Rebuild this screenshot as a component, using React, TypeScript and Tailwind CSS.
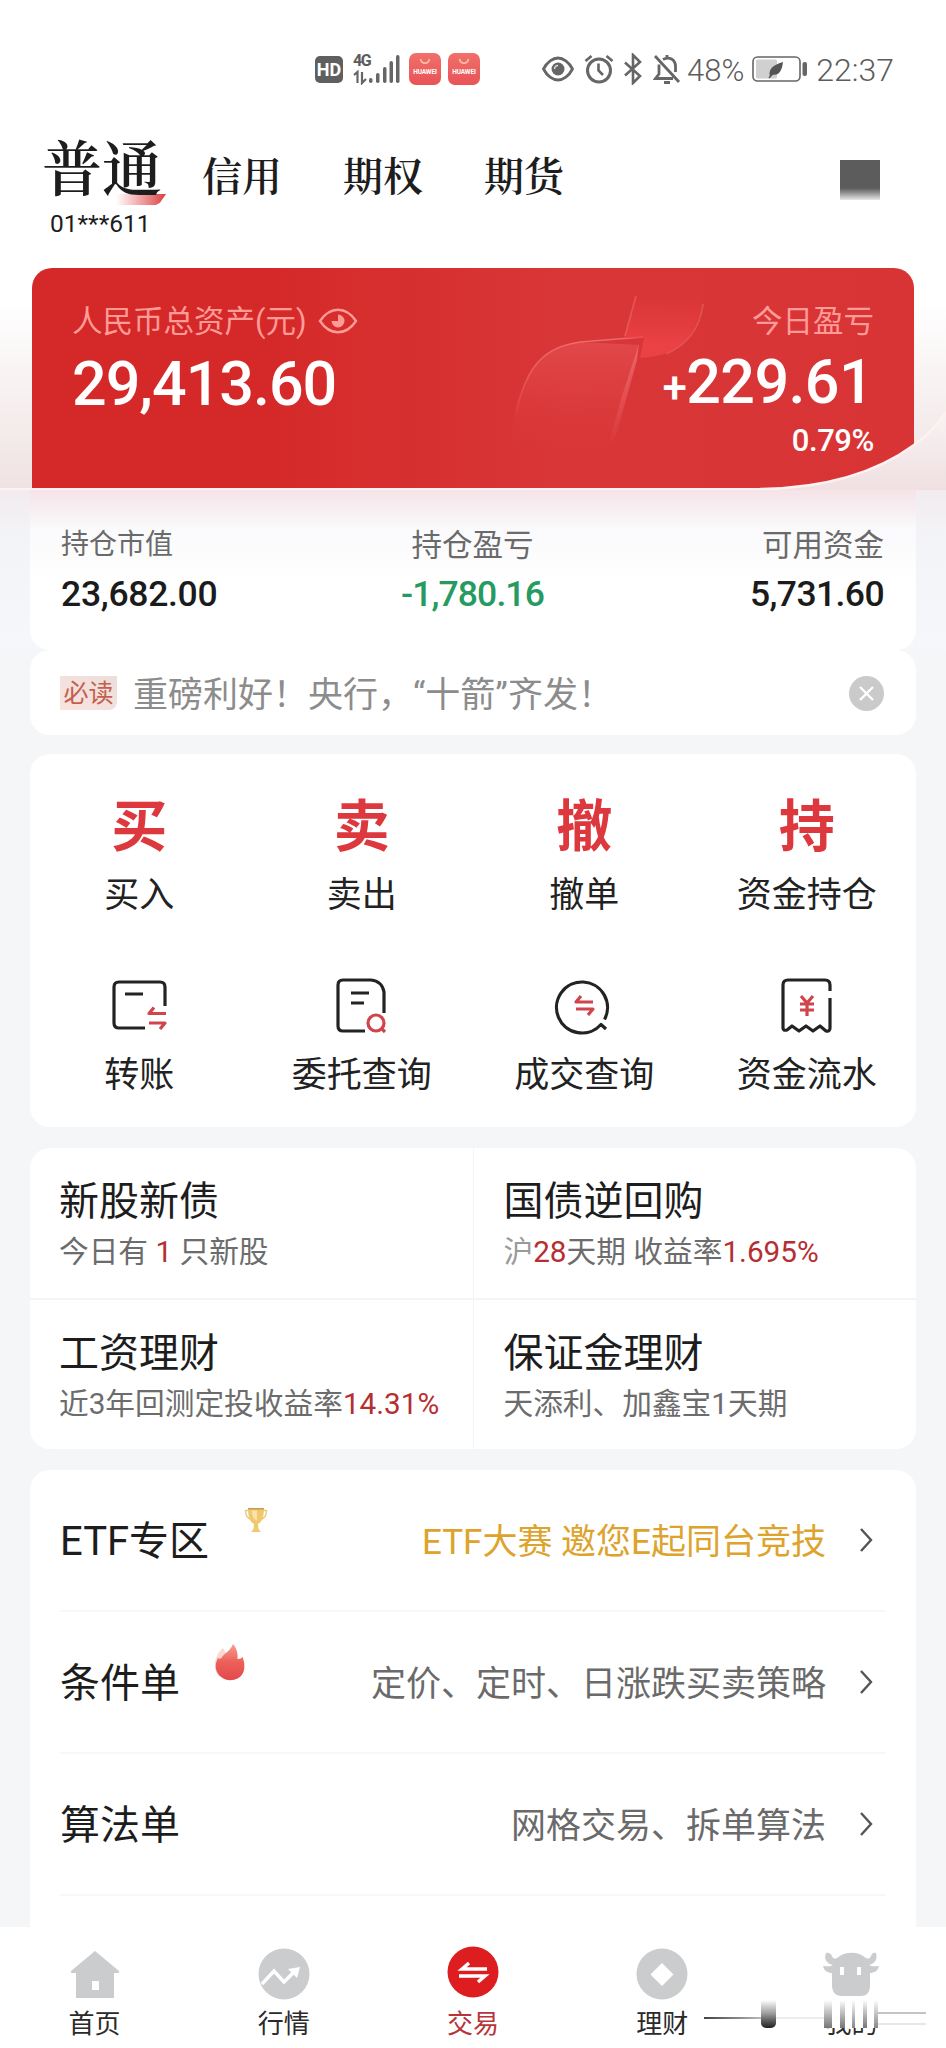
import type { ReactNode } from "react";

const sans = "font-['Roboto','Noto_Sans_CJK_SC',sans-serif]";
const serif = "font-['Noto_Serif_CJK_SC','Noto_Sans_CJK_SC',serif]";

function StatusBar() {
  return (
    <div className="flex h-[100px] items-center pt-[38px] pl-[315px] text-[#5c5c5c]">
      <div className="flex h-[27px] w-[28px] items-center justify-center rounded-[5px] bg-[#5f5f5f] text-[18px] font-bold text-white">HD</div>
      <div className="ml-[10px] flex h-[32px] w-[48px] flex-col">
        <span className="text-[16px] leading-[16px] font-bold tracking-[-1.5px]">4G</span>
        <svg className="-mt-[16px] h-[32px] w-[48px]" viewBox="0 0 48 32">
          <path d="M1 22l3.500-3V30M9 19v11l4-4" stroke="#666" fill="none" strokeWidth="2.200" />
          <g fill="#666">
            <rect x="16" y="25" width="3.500" height="5" rx="1.700" />
            <rect x="23" y="20" width="3.500" height="10" rx="1.700" />
            <rect x="30" y="14" width="3.500" height="16" rx="1.700" />
            <rect x="36.500" y="8" width="3.500" height="22" rx="1.700" />
            <rect x="43" y="2" width="3.500" height="28" rx="1.700" />
          </g>
        </svg>
      </div>
      <HuaweiBadge className="ml-[8px]" />
      <HuaweiBadge className="ml-[7px]" />
      <svg className="ml-[62px] h-[26px] w-[32px]" viewBox="0 0 32 26" fill="none" stroke="#666" strokeWidth="2.800">
        <path d="M1.500 13C5 6 11 2 16 2s11 4 14.500 11C27 20 21 24 16 24S5 20 1.500 13z" strokeLinejoin="round" />
        <circle cx="16" cy="13" r="6.500" fill="#666" stroke="none" />
        <path d="M12.500 13a3.500 3.500 0 0 1 3.500-3.500" stroke="#ddd" strokeWidth="1.500" />
      </svg>
      <svg className="ml-[10px] h-[30px] w-[30px]" viewBox="0 0 30 30" fill="none" stroke="#666" strokeWidth="3">
        <circle cx="15" cy="16.500" r="11.500" />
        <path d="M14.500 9.500v7l4.500 4.500M1.500 7l6-5M28.500 7l-6-5" strokeWidth="2.600" />
      </svg>
      <svg className="ml-[9px] h-[32px] w-[20px]" viewBox="0 0 20 32" fill="none" stroke="#666" strokeWidth="2.600">
        <path d="M2 9.500l15 13.500-7 7V2l7 7L2 22.500" />
      </svg>
      <svg className="ml-[10px] h-[30px] w-[28px]" viewBox="0 0 28 30" fill="none" stroke="#666" strokeWidth="2.800">
        <path d="M2 2l24 26M10 5.500c6-3.500 12.500 0 12.500 7V18M6 10.500V20l-3.500 4.500H20" />
        <path d="M11 28.500h6M14 1v4" />
      </svg>
      <span className="mt-[2px] ml-[6px] text-[31px] leading-none font-light">48%</span>
      <svg className="ml-[8px] h-[26px] w-[56px]" viewBox="0 0 56 26">
        <rect x="1" y="1" width="47" height="24" rx="4.500" fill="#fff" stroke="#666" strokeWidth="1.600" />
        <rect x="4" y="3.500" width="21" height="19" rx="1.500" fill="#d0d0d0" />
        <path d="M18 21c-2-7 2-12 13-15-1 9-4 14-11 12.500z" fill="#555" />
        <path d="M17 22l8-9" stroke="#555" strokeWidth="1.500" />
        <rect x="50.500" y="6" width="4.500" height="14" rx="2" fill="#666" />
      </svg>
      <span className="mt-[2px] ml-[8px] text-[32px] leading-none font-light">22:37</span>
    </div>
  );
}

function HuaweiBadge({ className }: { className: string }) {
  return (
    <div className={`flex h-[32px] w-[32px] flex-col items-center rounded-[7px] bg-gradient-to-b from-[#f0706a] to-[#e95257] ${className}`}>
      <svg className="mt-[5px] h-[7px] w-[12px]" viewBox="0 0 12 7">
        <path d="M1.500 1c1 5.500 8 5.500 9 0" fill="none" stroke="#ffc2a8" strokeWidth="1.500" />
      </svg>
      <span className="mt-[2px] text-[6.500px] leading-[10px] font-bold tracking-[-0.1px] text-white">HUAWEI</span>
    </div>
  );
}

function AccountTabs() {
  return (
    <div className="flex h-[168px] items-start pl-[42px]">
      <div className="relative w-[160px] pt-[31px] text-[#1d1d1d]">
        <div className="absolute top-[94px] left-[74px] h-[11px] w-[50px] bg-gradient-to-r from-white via-[#efa2a5] to-[#d73a40] [clip-path:polygon(0_0,100%_0,88%_80%,80%_100%,0_100%)]" />
        <div className={`relative text-[60px] leading-[68px] font-semibold ${serif}`}>普通</div>
        <div className="mt-[11px] pl-[8px] text-[24.500px] leading-[28px]">01***611</div>
      </div>
      <div className={`flex pt-[49px] text-[40px] leading-[50px] font-semibold text-[#1d1d1d] ${serif}`}>
        <span className="w-[141px]">信用</span>
        <span className="w-[141px]">期权</span>
        <span className="w-[80px]">期货</span>
      </div>
      <div className="mt-[60px] ml-[276px] h-[40px] w-[40px] bg-gradient-to-b from-[#5c5c5c] from-70% to-[#e8e8e8]" />
    </div>
  );
}

function AssetCard() {
  return (
    <section className="relative h-[222px] bg-gradient-to-b from-white from-15% to-[#efe2e2] px-[32px]">
      <div className="relative flex h-[220px] justify-between overflow-hidden rounded-t-[20px] bg-gradient-to-r from-[#d52828] from-25% via-[#d93637] via-60% to-[#d83435]">
        <svg className="absolute top-0 left-[460px] h-[220px] w-[260px]" viewBox="0 0 260 220" fill="none">
          <defs>
            <linearGradient id="leafLow" x1="0" y1="0" x2="0" y2="1">
              <stop offset="0" stopColor="#f0686a" stopOpacity=".36" />
              <stop offset=".85" stopColor="#e04a4a" stopOpacity="0" />
            </linearGradient>
            <linearGradient id="leafTop" x1="0" y1="0" x2="0" y2="1">
              <stop offset=".1" stopColor="#ec4146" stopOpacity="0" />
              <stop offset=".8" stopColor="#ef4448" stopOpacity=".8" />
            </linearGradient>
            <linearGradient id="leafStem" x1="0" y1="0" x2="0" y2="1">
              <stop offset="0" stopColor="#f2777a" stopOpacity=".7" />
              <stop offset="1" stopColor="#f2777a" stopOpacity="0" />
            </linearGradient>
            <linearGradient id="leafEdge" x1="0" y1="0" x2="0" y2="1">
              <stop offset="0" stopColor="#f27d7d" stopOpacity=".75" />
              <stop offset="1" stopColor="#f27d7d" stopOpacity=".1" />
            </linearGradient>
          </defs>
          <path d="M22 146C34 98 52 79 88 74L147 77 120 180 15 200z" fill="url(#leafLow)" />
          <path d="M24 146C34 98 52 79 88 74L151 69" stroke="url(#leafEdge)" strokeWidth="1.500" />
          <path d="M147 76L145 92 124 168 116 178 130 128z" fill="url(#leafStem)" />
          <path d="M146 22L132 70 152 70 148 90C190 88 208 66 212 20z" fill="url(#leafTop)" />
          <path d="M144 28L133 68M174 86C198 76 208 58 211 36" stroke="#f27d7d" strokeOpacity=".4" strokeWidth="1.800" />
        </svg>
        <div className="relative pt-[36px] pl-[40px]">
          <div className="flex h-[36px] items-center text-[#ff9b97]">
            <span className="text-[30.500px] leading-none">人民币总资产(元)</span>
            <svg className="-mt-[2px] ml-[11px] h-[28px] w-[40px]" viewBox="0 0 40 28" fill="none" stroke="currentColor" strokeWidth="2.400">
              <path d="M2 14C12-1 28-1 38 14 28 29 12 29 2 14z" />
              <path d="M20 7.500v6.500h-6.500a6.500 6.500 0 1 0 6.500-6.500z" fill="currentColor" stroke="none" />
            </svg>
          </div>
          <div className="mt-[9px] text-[61px] leading-[70px] font-medium tracking-[-1px] text-white">29,413.60</div>
        </div>
        <div className="relative flex flex-col items-end pt-[36px] pr-[40px]">
          <div className="flex h-[36px] items-center text-[30.500px] leading-none text-[#ff9b97]">今日盈亏</div>
          <div className="mt-[7px] mr-[1px] h-[70px] text-[61px] leading-[70px] font-medium tracking-[-0.6px] text-white">
            <span className="text-[44px] leading-none">+</span>229.61
          </div>
          <div className="mt-[6px] text-[31px] leading-[36px] font-medium tracking-[-0.4px] text-white">0.79%</div>
        </div>
      </div>
      {/* rounded sweep that cuts the lower right corner */}
      <svg className="absolute right-0 bottom-0 h-[90px] w-[186px]" viewBox="0 0 186 90">
        <defs>
          <linearGradient id="sweep" x1="0" y1="0" x2="0" y2="1">
            <stop offset="0" stopColor="#f8f2f3" />
            <stop offset="1" stopColor="#f0e0e2" />
          </linearGradient>
        </defs>
        <path d="M0 89C70 88 120 70 154 45C168 35 178 25 186 12V90H0z" fill="url(#sweep)" />
        <path d="M0 89C70 88 120 70 154 45C168 35 178 25 186 12" fill="none" stroke="#fff1f1" strokeWidth="2.500" />
      </svg>
      <div className="absolute bottom-0 left-0 h-[2px] w-[780px] bg-[#fdf1f1]" />
    </section>
  );
}

function Holdings() {
  return (
    <section className="bg-gradient-to-b from-[#f2ebef] via-[#f3f4f7] via-30% to-[#f5f7fa] px-[30px]">
      <div className="grid h-[160px] grid-cols-3 rounded-b-[20px] bg-gradient-to-b from-[#f5e3e7] via-[#fafafc] via-25% to-white to-60% pt-[37px] pr-[32px] pl-[31px]">
        <div>
          <div className="text-[28px] leading-[36px] text-[#6a6a6a]">持仓市值</div>
          <div className="mt-[11px] text-[35.500px] leading-[40px] font-medium tracking-[-0.3px] text-[#1b1b1b]">23,682.00</div>
        </div>
        <div className="flex flex-col items-center">
          <div className="text-[30.500px] leading-[38px] text-[#6a6a6a]">持仓盈亏</div>
          <div className="mt-[9px] text-[35.500px] leading-[40px] font-medium tracking-[-0.9px] text-[#259b62]">-1,780.16</div>
        </div>
        <div className="flex flex-col items-end">
          <div className="text-[30.500px] leading-[38px] text-[#6a6a6a]">可用资金</div>
          <div className="mt-[9px] text-[35.500px] leading-[40px] font-medium tracking-[-0.6px] text-[#1b1b1b]">5,731.60</div>
        </div>
      </div>
    </section>
  );
}

function Notice() {
  return (
    <section className="mx-[30px] flex h-[85px] items-center rounded-[20px] bg-white pr-[32px] pl-[30px]">
      <span className="flex h-[34px] w-[57px] items-center justify-center rounded-br-[8px] bg-gradient-to-tr from-[#fae3de] to-[#ecdedb] pt-[2px] text-[25px] leading-none text-[#c4604f]">必读</span>
      <span className="ml-[16px] flex-1 pt-[5px] text-[35px] leading-none text-[#8c8c8c]">重磅利好！央行，“十箭”齐发！</span>
      <svg className="mt-px h-[35px] w-[35px]" viewBox="0 0 35 35">
        <circle cx="17.500" cy="17.500" r="17.500" fill="#cacaca" />
        <path d="M11 11l13 13M24 11L11 24" stroke="#fff" strokeWidth="2.400" />
      </svg>
    </section>
  );
}

const ink = "#232323";
const red = "#cf454b";

const actions: { label: string; icon: ReactNode }[] = [
  { label: "买入", icon: <RedGlyph>买</RedGlyph> },
  { label: "卖出", icon: <RedGlyph>卖</RedGlyph> },
  { label: "撤单", icon: <RedGlyph>撤</RedGlyph> },
  { label: "资金持仓", icon: <RedGlyph>持</RedGlyph> },
  {
    label: "转账",
    icon: (
      <LineIcon>
        <path d="M54 28V9q0-5-5-5H8Q3 4 3 9v36q0 5 5 5h26M14 16h18" stroke={ink} />
        <path d="M55 35.500H38l5-6M38 45h16l-5 6" stroke={red} />
      </LineIcon>
    ),
  },
  {
    label: "委托查询",
    icon: (
      <LineIcon>
        <path d="M50 35V14Q48 3 37 2H9Q4 2 4 7v41q0 5 5 5h22M17 15h18M17 25h13" stroke={ink} />
        <circle cx="42" cy="45" r="8" stroke={red} />
        <path d="M47 50l4 4" stroke={red} />
      </LineIcon>
    ),
  },
  {
    label: "成交查询",
    icon: (
      <LineIcon>
        <path d="M48.500 41.500A25.500 25.500 0 1 0 45 46.500l5 4.500" stroke={ink} />
        <path d="M37 24H20l5-6M20 31h17l-5 6" stroke={red} />
      </LineIcon>
    ),
  },
  {
    label: "资金流水",
    icon: (
      <LineIcon>
        <path d="M51 13V7q0-5-5-5H9Q4 2 4 7v43q0 3 4 2l5-4 7 5 7-5 7 5 7-5 6 5q4 1 4-3V20" stroke={ink} />
        <path d="M22 18l6 7 6-7M21 26h14M21 32h14M28 25v13" stroke={red} />
      </LineIcon>
    ),
  },
];

function RedGlyph({ children }: { children: string }) {
  return <span className="text-[56px] leading-none font-bold text-[#dc383d]">{children}</span>;
}

function LineIcon({ children }: { children: ReactNode }) {
  return (
    <svg className="-mt-[2px] h-[56px] w-[56px] overflow-visible" viewBox="0 0 56 56" fill="none" strokeWidth="3.200" strokeLinejoin="round">
      {children}
    </svg>
  );
}

function QuickActions() {
  return (
    <section className="mx-[30px] mt-[19px] h-[373px] rounded-[20px] bg-white pt-[43px]">
      <div className="-mx-[2px] grid grid-cols-4">
        {actions.map(({ label, icon }) => (
          <div key={label} className="flex h-[180px] flex-col items-center">
            <div className="flex h-[60px] items-center">{icon}</div>
            <div className="mt-[18px] text-[35px] leading-[42px] text-[#222]">{label}</div>
          </div>
        ))}
      </div>
    </section>
  );
}

function Red({ children }: { children: string }) {
  return <span className="text-[#b52e31]">{children}</span>;
}

const products: { title: string; sub: ReactNode }[] = [
  { title: "新股新债", sub: <>今日有 <Red>1</Red> 只新股</> },
  { title: "国债逆回购", sub: <><span className="text-[#9a9a9a]">沪</span><Red>28</Red>天期 收益率<Red>1.695%</Red></> },
  { title: "工资理财", sub: <>近3年回测定投收益率<Red>14.31%</Red></> },
  { title: "保证金理财", sub: "天添利、加鑫宝1天期" },
];

function Products() {
  return (
    <section className="mx-[30px] mt-[21px] grid h-[301px] grid-cols-2 gap-x-px gap-y-[2px] overflow-hidden rounded-[20px] bg-[#f3f4f5]">
      {products.map(({ title, sub }) => (
        <div key={title} className="bg-white pt-[29px] pl-[29px] whitespace-nowrap even:pl-[30px]">
          <div className="text-[40px] leading-[50px] text-[#1d1d1d]">{title}</div>
          <div className="mt-[7px] text-[29.700px] leading-[36px] text-[#6c6c6c]">{sub}</div>
        </div>
      ))}
    </section>
  );
}

function Trophy() {
  return (
    <svg className="h-[26px] w-[26px]" viewBox="0 0 26 26">
      <path d="M6 3.500H2.500c0 5 2 8 6 9M20 3.500h3.500c0 5-2 8-6 9" fill="none" stroke="#ecca87" strokeWidth="1.500" />
      <path d="M5 1h16c0 9-2 14-6 16l.5 5 2.500 3H8l2.500-3 .5-5C7 15 5 10 5 1z" fill="#f0c870" />
      <path d="M5 1h16v1.500H5z" fill="#c99b4c" />
      <path d="M9 3.500h5v10C10 12 9 9 9 3.500z" fill="#fae3a4" />
    </svg>
  );
}

function Flame() {
  return (
    <svg className="h-[37px] w-[34px]" viewBox="0 0 34 37">
      <defs>
        <linearGradient id="flame" x1="0" y1="0" x2="0" y2="1">
          <stop offset="0" stopColor="#f5a08e" />
          <stop offset=".5" stopColor="#ec6059" />
          <stop offset="1" stopColor="#e2494c" />
        </linearGradient>
      </defs>
      <path d="M10 4C2 10-2 26 7 33l8-20z" fill="#fbd9d0" />
      <path d="M20 0c4 5 5 9 4.500 15 3 0 4-1 5-2 3 7 3 17-4 21-6 3-11 3-16 0C2 29 1 21 5 14c2 1 3 1 4-1C12 9 17 7 20 0z" fill="url(#flame)" />
    </svg>
  );
}

function MenuRow({ title, desc, badge, highlight }: { title: string; desc: string; badge?: ReactNode; highlight?: boolean }) {
  return (
    <div className="flex h-[142px] items-center border-b-2 border-[#f7f7f7] whitespace-nowrap">
      <span className="pt-[3px] text-[40px] leading-none text-[#1d1d1d]">{title}</span>
      {badge}
      <span className={`ml-auto pt-[4px] text-[35px] leading-none ${highlight ? "text-[#dda32c]" : "text-[#6a6a6a]"}`}>{desc}</span>
      <svg className="mr-[11px] ml-[32px] h-[24px] w-[16px]" viewBox="0 0 16 24" fill="none" stroke="#555" strokeWidth="2.400">
        <path d="M3 1l10 11L3 23" />
      </svg>
    </div>
  );
}

function Menu() {
  return (
    <section className="mx-[30px] mt-[21px] h-[457px] rounded-t-[20px] bg-white pr-[31px] pl-[30px]">
      <MenuRow title="ETF专区" desc="ETF大赛 邀您E起同台竞技" highlight badge={<div className="-mt-[40px] ml-[34px]"><Trophy /></div>} />
      <MenuRow title="条件单" desc="定价、定时、日涨跌买卖策略" badge={<div className="-mt-[39px] ml-[33px]"><Flame /></div>} />
      <MenuRow title="算法单" desc="网格交易、拆单算法" />
    </section>
  );
}

const tabs: { label: string; icon: ReactNode }[] = [
  {
    label: "首页",
    icon: <path fillRule="evenodd" d="M26 3l24 20q1 2-2 2h-3v25H7V25H4q-3 0-2-2zM23 33v9h7v-9z" fill="#cbcccd" />,
  },
  {
    label: "行情",
    icon: (
      <>
        <circle cx="26" cy="26" r="25.500" fill="#cbcccd" />
        <path d="M4 36l12-13 10 11 10-10" fill="none" stroke="#fff" strokeWidth="3.400" />
        <path d="M30 21l12-2-3 11z" fill="#fff" />
      </>
    ),
  },
  {
    label: "交易",
    icon: (
      <>
        <circle cx="26" cy="24" r="25.500" fill="#de1d20" />
        <path d="M40 21H15l7-6M12 28h26l-7 6" fill="none" stroke="#fff" strokeWidth="3.400" />
      </>
    ),
  },
  {
    label: "理财",
    icon: (
      <>
        <circle cx="26" cy="26" r="25.500" fill="#cbcccd" />
        <path d="M26 15l11.500 11.500L26 38 14.500 26.500z" fill="#fff" />
      </>
    ),
  },
  {
    label: "我的",
    icon: (
      <>
        <path d="M1 5c-3 7 2 11 7 12-3 2-6 1-10 1 1 5 5 7 9 7v14q1 9 10 9h19q8 0 9-9V25c4 0 8-2 9-7-4 0-7 1-10-1 5-1 9-5 7-12-3-1-4 1-5 3-1 3-3 3-5 2C33 3 20 3 12 10c-2 1-4 1-5-2-1-2-3-4-6-3z" fill="#cbcccd" />
        <path d="M17 19v8M34 19v8" stroke="#fff" strokeWidth="4" />
      </>
    ),
  },
];

function TabBar() {
  return (
    <nav className="relative grid h-[121px] grid-cols-5 bg-white pt-[21px]">
      {tabs.map(({ label, icon }) => (
        <div key={label} className="flex flex-col items-center">
          <svg className="h-[52px] w-[52px] overflow-visible" viewBox="0 0 52 52">{icon}</svg>
          <span className={`mt-[7px] text-[26px] leading-[34px] ${label === "交易" ? "text-[#b8343a]" : "text-[#2a2a2a]"}`}>{label}</span>
        </div>
      ))}
      {/* streaks lying over the last label */}
      <div className="absolute top-[73px] right-[20px] flex h-[28px] w-[222px]">
        <div className="mt-[17px] h-[2px] w-[57px] bg-gradient-to-r from-[#444] to-[#bbb]" />
        <div className="h-[28px] w-[15px] rounded-b-[5px] bg-gradient-to-b from-white via-[#999] to-[#222]" />
        <div className="mt-[17px] h-[2px] w-[48px] bg-[#ededed]" />
        <div className="flex h-[28px] w-[54px] justify-between bg-white">
          <div className="w-[8px] bg-gradient-to-b from-white to-[#777]" />
          <div className="w-[5px] bg-gradient-to-b from-white to-[#777]" />
          <div className="w-[3px] bg-gradient-to-b from-white to-[#888]" />
          <div className="w-[4px] bg-gradient-to-b from-white to-[#777]" />
          <div className="w-[4px] bg-gradient-to-b from-white to-[#888]" />
        </div>
        <div className="mt-[12px] h-[13px] w-[48px] border-y-2 border-t-[#c4c4c4] border-b-[#e6e6e6]" />
      </div>
    </nav>
  );
}

export default function App() {
  return (
    <div className={`flex h-[2048px] w-[946px] flex-col overflow-hidden bg-[#f5f6f8] ${sans}`}>
      <header className="bg-white">
        <StatusBar />
        <AccountTabs />
      </header>
      <main className="flex-1">
        <AssetCard />
        <Holdings />
        <Notice />
        <QuickActions />
        <Products />
        <Menu />
      </main>
      <TabBar />
    </div>
  );
}
